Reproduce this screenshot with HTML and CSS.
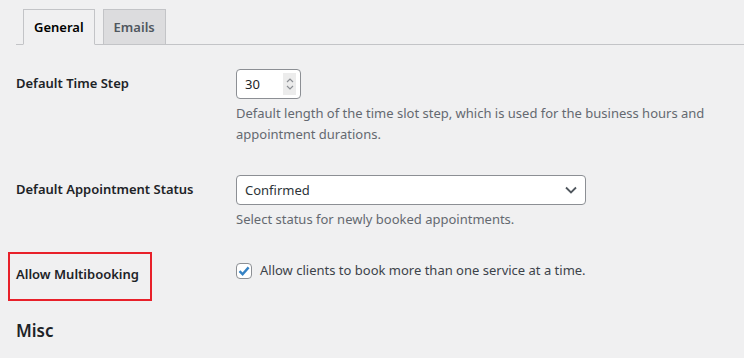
FILE: index.html
```html
<!DOCTYPE html>
<html lang="en">
<head>
    <meta charset="UTF-8">
    <meta name="viewport" content="width=device-width, initial-scale=1.0">
    <title>Settings</title>
    <link rel="stylesheet" href="styles.css">
</head>
<body>

    <div class="wrap">
        <nav class="nav-tabs">
            <a class="nav-tab active" href="#">General</a>
            <a class="nav-tab" href="#">Emails</a>
        </nav>

        <table class="form-table">
            <tr>
                <th>Default Time Step</th>
                <td>
                    <div class="number-field">
                        <input type="text" value="30" readonly>
                        <span class="spinner">
                            <svg width="10" height="14" viewBox="0 0 10 14"><path d="M2 5 L5 2 L8 5 M2 9 L5 12 L8 9" fill="none" stroke="#8c8f94" stroke-width="1.2"/></svg>
                        </span>
                    </div>
                    <p class="description">Default length of the time slot step, which is used for the business hours and appointment durations.</p>
                </td>
            </tr>
            <tr>
                <th>Default Appointment Status</th>
                <td>
                    <div class="select-field">
                        <select>
                            <option>Confirmed</option>
                        </select>
                        <svg class="chevron" width="12" height="8" viewBox="0 0 12 8"><path d="M1 1.5 L6 6.5 L11 1.5" fill="none" stroke="#50575e" stroke-width="1.8"/></svg>
                    </div>
                    <p class="description">Select status for newly booked appointments.</p>
                </td>
            </tr>
            <tr>
                <th class="highlight">Allow Multibooking</th>
                <td>
                    <label class="check">
                        <span class="box">
                            <svg width="14" height="14" viewBox="0 0 14 14"><path d="M2.5 7.2 L5.6 10.2 L11.6 3.4" fill="none" stroke="#3582c4" stroke-width="2.4"/></svg>
                        </span>
                        Allow clients to book more than one service at a time.
                    </label>
                </td>
            </tr>
        </table>

        <h2 class="section-title">Misc</h2>
    </div>

</body>
</html>
```

FILE: styles.css
```css
body {
    margin: 0;
    background-color: #f0f0f1;
    color: #1d2327;
    font-family: "Noto Sans", "Open Sans", sans-serif;
    font-size: 13px;
}

.wrap {
    padding: 9px 0 0 16px;
}

/* Вкладки */
.nav-tabs {
    display: flex;
    border-bottom: 1px solid #c3c4c7;
    padding-left: 7px;
    gap: 8px;
}

.nav-tab {
    display: block;
    padding: 5px 10px;
    margin-bottom: -1px;
    border: 1px solid #c3c4c7;
    background-color: #dcdcde;
    color: #50575e;
    font-size: 13px;
    font-weight: 600;
    line-height: 24px;
    text-decoration: none;
}

.nav-tab.active {
    background-color: #f0f0f1;
    border-bottom-color: #f0f0f1;
    color: #000;
}

/* Таблиця налаштувань */
.form-table {
    border-collapse: collapse;
    margin-top: 9px;
    width: 100%;
}

.form-table th {
    width: 200px;
    padding: 20px 10px 20px 0;
    text-align: left;
    vertical-align: top;
    font-weight: 600;
    line-height: 18px;
}

.form-table td {
    padding: 15px 10px;
    vertical-align: top;
    line-height: 21px;
}

.highlight {
    position: relative;
}

.highlight::before {
    content: "";
    position: absolute;
    left: -8px;
    top: 7px;
    width: 140px;
    height: 45px;
    border: 2px solid #e8202a;
}

.description {
    margin: 4px 0 0;
    color: #646970;
    max-width: 475px;
}

.number-field {
    display: flex;
    align-items: center;
    height: 28px;
    width: 51px;
    padding: 0 4px 0 8px;
    background-color: #fff;
    border: 1px solid #8c8f94;
    border-radius: 4px;
}

.number-field input {
    width: 38px;
    border: none;
    padding: 0;
    font: inherit;
    color: #1d2327;
    background: transparent;
    outline: none;
}

.spinner {
    display: flex;
    align-items: center;
    justify-content: center;
    width: 13px;
    height: 22px;
    background-color: #ececec;
}

.select-field {
    position: relative;
    width: 350px;
}

.select-field select {
    appearance: none;
    width: 100%;
    height: 30px;
    padding: 0 24px 0 8px;
    background-color: #fff;
    border: 1px solid #8c8f94;
    border-radius: 4px;
    font: inherit;
    color: #2c3338;
}

.chevron {
    position: absolute;
    right: 9px;
    top: 11px;
}

.check {
    display: flex;
    align-items: center;
    gap: 8px;
    color: #3c434a;
}

.box {
    display: flex;
    align-items: center;
    justify-content: center;
    width: 14px;
    height: 14px;
    background-color: #fff;
    border: 1px solid #8c8f94;
    border-radius: 4px;
}

.section-title {
    margin: 16px 0;
    font-size: 17px;
    font-weight: 600;
    line-height: 24px;
}
```
